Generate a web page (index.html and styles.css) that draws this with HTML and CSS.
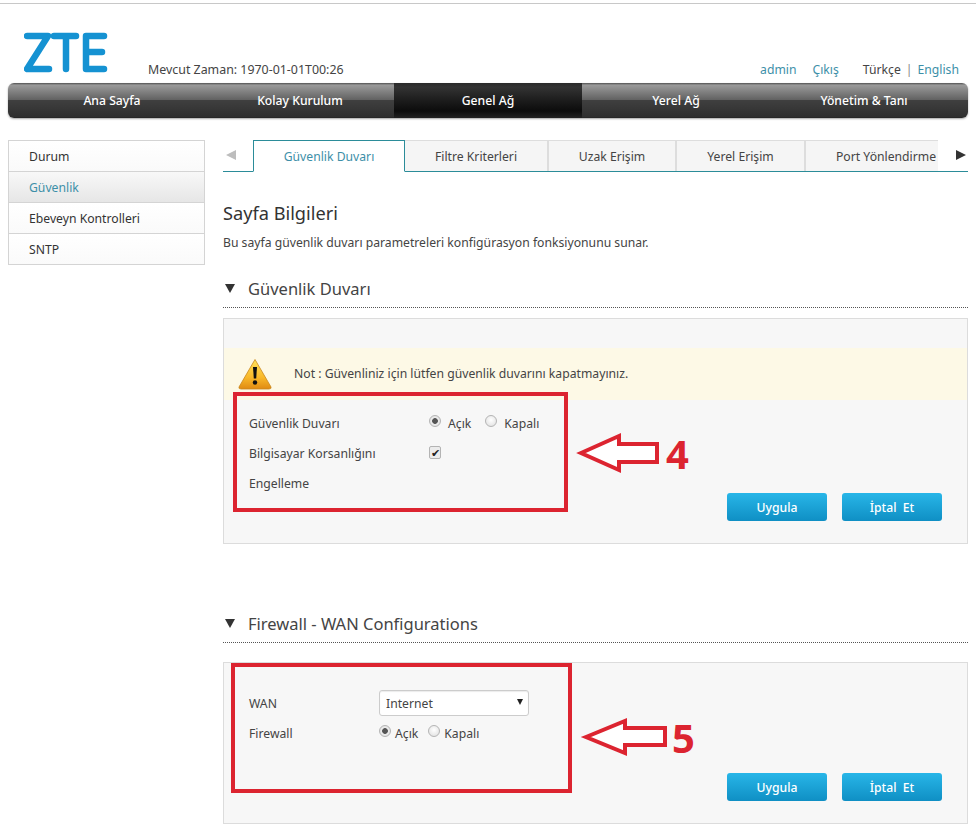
FILE: index.html
```html
<!DOCTYPE html>
<html lang="tr">
<head>
<meta charset="utf-8">
<title>ZTE</title>
<link rel="stylesheet" href="styles.css">
</head>
<body>
<div class="page">
  <header class="top">
    <svg class="logo" width="84" height="42" viewBox="0 0 84 42" aria-label="ZTE">
      <g fill="none" stroke="#1592d2" stroke-width="6.500" stroke-linecap="round" stroke-linejoin="round">
        <path d="M3 4H24L3 37H25"/>
        <path d="M30 4H52M42 4V37"/>
        <path d="M80 4H62V37H80M62 20H78"/>
      </g>
    </svg>
    <div class="clock">Mevcut Zaman: 1970-01-01T00:26</div>
    <div class="userbar">
      <a class="link">admin</a>
      <a class="link gap">Çıkış</a>
      <span class="lang">Türkçe</span>
      <span class="sep">|</span>
      <a class="link">English</a>
    </div>
  </header>

  <nav class="nav">
    <a class="nav-item">Ana Sayfa</a>
    <a class="nav-item">Kolay Kurulum</a>
    <a class="nav-item active">Genel Ağ</a>
    <a class="nav-item">Yerel Ağ</a>
    <a class="nav-item">Yönetim &amp; Tanı</a>
  </nav>

  <div class="layout">
    <aside class="side">
      <a class="side-item">Durum</a>
      <a class="side-item current">Güvenlik</a>
      <a class="side-item">Ebeveyn Kontrolleri</a>
      <a class="side-item">SNTP</a>
    </aside>

    <main class="main">
      <div class="tabs">
        <span class="tab-arrow left"></span>
        <a class="tab active t1">Güvenlik Duvarı</a>
        <a class="tab t2">Filtre Kriterleri</a>
        <a class="tab t3">Uzak Erişim</a>
        <a class="tab t4">Yerel Erişim</a>
        <a class="tab t5">Port Yönlendirme</a>
        <span class="tab-arrow right"></span>
      </div>

      <h1 class="title">Sayfa Bilgileri</h1>
      <p class="desc">Bu sayfa güvenlik duvarı parametreleri konfigürasyon fonksiyonunu sunar.</p>

      <h2 class="sec"><span class="caret"></span>Güvenlik Duvarı</h2>
      <section class="panel p1">
        <div class="note">
          <svg class="warn" width="34" height="32" viewBox="0 0 34 32">
            <defs>
              <linearGradient id="wg" x1="0" y1="0" x2="0" y2="1">
                <stop offset="0" stop-color="#ffe25a"/>
                <stop offset=".6" stop-color="#f9b92a"/>
                <stop offset="1" stop-color="#e08a12"/>
              </linearGradient>
            </defs>
            <path d="M17 1.500 33 29q.5 2-2 2H3q-2.500 0-2-2Z" fill="url(#wg)" stroke="#c9861c" stroke-width=".8"/>
            <path d="M15 9h4l-.8 11.500h-2.400Z" fill="#111"/>
            <circle cx="17" cy="24.500" r="2.200" fill="#111"/>
          </svg>
          <span>Not : Güvenliniz için lütfen güvenlik duvarını kapatmayınız.</span>
        </div>
        <div class="body">
          <div class="form f1">
            <div class="lbl">Güvenlik Duvarı</div>
            <div class="opts o1">
              <span class="radio on"></span><span>Açık</span>
              <span class="radio"></span><span>Kapalı</span>
            </div>
            <div class="lbl">Bilgisayar Korsanlığını</div>
            <div class="opts"><span class="check">✔</span></div>
            <div class="lbl">Engelleme</div>
            <div></div>
          </div>
          <div class="actions">
            <button class="btn">Uygula</button>
            <button class="btn">İptal&nbsp; Et</button>
          </div>
        </div>
      </section>

      <h2 class="sec s2"><span class="caret"></span>Firewall - WAN Configurations</h2>
      <section class="panel p2">
        <div class="body">
          <div class="form f2">
            <div class="lbl">WAN</div>
            <div class="selwrap"><select class="sel"><option>Internet</option></select></div>
            <div class="lbl">Firewall</div>
            <div class="opts o2">
              <span class="radio on"></span><span>Açık</span>
              <span class="radio"></span><span>Kapalı</span>
            </div>
          </div>
          <div class="actions">
            <button class="btn">Uygula</button>
            <button class="btn">İptal&nbsp; Et</button>
          </div>
        </div>
      </section>
    </main>
  </div>

  <div class="redbox b1"></div>
  <div class="redbox b2"></div>
  <svg class="overlay" width="976" height="837" viewBox="0 0 976 837">
    <g fill="#fff" stroke="#dc2430" stroke-width="4" stroke-linejoin="miter">
      <path d="M581 453 619 436V444H657V462H619V470Z"/>
      <path d="M586 737 625 721V728H665V745H625V753Z"/>
    </g>
  </svg>
  <span class="num n4">4</span>
  <span class="num n5">5</span>
</div>
</body>
</html>
```
FILE: styles.css
```css
* { box-sizing: border-box; }
html, body { margin: 0; padding: 0; background: #fff; }
body {
  font-family: "Noto Sans", "Open Sans", sans-serif;
  font-size: 12.2px;
  color: #444;
  overflow: hidden;
}
.page { position: relative; width: 976px; height: 837px; padding-top: 3px; }

.top {
  display: flex;
  align-items: flex-end;
  height: 80px;
  border-top: 1px solid #c8c8c8;
  padding: 0 17px 5px 24px;
}
.logo { display: block; margin-bottom: 4px; }
.clock { margin-left: 40px; font-size: 12.4px; line-height: 16px; color: #444; }
.userbar { margin-left: auto; display: flex; align-items: center; line-height: 16px; }
.link { color: #3d8fa8; }
.gap { margin-left: 16px; }
.lang { margin-left: 24px; color: #444; }
.sep { margin: 0 5px; color: #888; }

.nav {
  display: flex;
  height: 35px;
  margin: 0 8px;
  padding: 0 10px;
  border-radius: 6px;
  background: linear-gradient(#505050 0, #9a9a9a 6%, #5f5f5f 50%, #3f3f3f 50%, #2f2f2f 97%, #222 100%);
  box-shadow: 0 1px 2px rgba(0,0,0,.35);
}
.nav-item {
  flex: 0 0 188px;
  display: flex;
  align-items: center;
  justify-content: center;
  color: #fff;
  font-weight: 500;
  font-size: 12.2px;
}
.nav-item.active {
  background: linear-gradient(#2a2a2a 0, #333 12%, #1c1c1c 50%, #0c0c0c 80%, #222 100%);
}

.layout { display: flex; margin: 22px 8px 0; }

.side {
  flex: 0 0 197px;
  align-self: flex-start;
  border: 1px solid #d4d4d4;
  border-bottom: 0;
  background: #fff;
}
.side-item {
  display: flex;
  align-items: center;
  height: 31px;
  padding-left: 20px;
  color: #333;
  border-bottom: 1px solid #d4d4d4;
  background: linear-gradient(#fff, #fafafa);
}
.side-item.current {
  color: #3d8fa8;
  background: linear-gradient(#f8f8f8, #e6e6e6);
}

.main { flex: 0 0 745px; margin-left: 18px; }

.tabs {
  position: relative;
  display: flex;
  align-items: flex-start;
  height: 32px;
  padding-left: 30px;
  border-bottom: 1px solid #2b8c99;
}
.tab {
  display: flex;
  align-items: center;
  justify-content: center;
  height: 31px;
  background: #f5f5f5;
  border-top: 1px solid #ddd;
  border-right: 2px solid #ddd;
  color: #444;
}
.tab.active {
  position: relative;
  height: 32px;
  background: #fff;
  color: #3d8fa8;
  border: 1px solid #2b8c99;
  border-bottom: 1px solid #fff;
}
.t1 { width: 152px; }
.t2 { width: 144px; }
.t3 { width: 128px; }
.t4 { width: 129px; }
.t5 { width: 132px; border-right: 0; padding-left: 30px; justify-content: flex-start; white-space: nowrap; overflow: hidden; }
.tab-arrow { position: absolute; top: 10px; width: 0; height: 0; border-style: solid; border-width: 5.500px 0; border-color: transparent; }
.tab-arrow.left { left: 3px; border-right: 10px solid #bdbdbd; }
.tab-arrow.right { right: 2px; border-left: 10px solid #333; }

.title { margin: 30px 0 0; font-size: 18.200px; font-weight: 400; line-height: 22px; color: #333; }
.desc { margin: 11px 0 0; line-height: 16px; color: #444; }

.sec {
  display: flex;
  align-items: center;
  height: 37px;
  margin: 20px 0 0;
  padding-bottom: 2px;
  font-size: 16.500px;
  font-weight: 400;
  color: #444;
  border-bottom: 1px dotted #555;
}
.sec.s2 { margin-top: 62px; }
.caret {
  width: 0; height: 0;
  margin: 0 13px 0 2px;
  border-style: solid;
  border-width: 9px 5.500px 0;
  border-color: #333 transparent transparent;
}

.panel {
  display: flex;
  flex-direction: column;
  margin-top: 10px;
  background: #f7f7f7;
  border: 1px solid #dcdcdc;
}
.p1 { height: 226px; padding-top: 29px; }
.p2 { height: 162px; padding-top: 25px; margin-top: 19px; }

.note {
  display: flex;
  align-items: center;
  height: 52px;
  padding: 0 14px;
  background: #fdf9e6;
  color: #444;
}
.warn { margin-right: 22px; margin-top: -1px; }
.note span { margin-top: -2px; }

.body { flex: 1; display: flex; justify-content: space-between; padding: 0 25px 22px; }
.p1 .body { padding-top: 8px; }

.form { display: grid; grid-auto-rows: 30px; align-items: center; align-self: flex-start; }
.f1 { grid-template-columns: 180px auto; }
.f2 { grid-template-columns: 130px auto; }
.lbl { color: #444; }

.opts { display: flex; align-items: center; color: #444; }
.o1 .radio { margin-right: 7px; }
.o1 span + span + .radio { margin-left: 14px; }
.o2 .radio { margin-right: 4px; }
.o2 span + span + .radio { margin-left: 10px; }

.radio {
  display: block;
  width: 12px; height: 12px;
  margin-top: -4px;
  border-radius: 50%;
  border: 1px solid #b4b4b4;
  background: radial-gradient(circle at 50% 40%, #fff, #ddd);
}
.radio.on {
  background: radial-gradient(circle, #555 0, #555 2.500px, #ececec 3.200px, #ddd 100%);
}
.check {
  display: flex;
  align-items: center;
  justify-content: center;
  width: 12px; height: 13px;
  margin-top: -2px;
  border: 1px solid #b4b4b4;
  border-radius: 2px;
  background: #ececec;
  color: #222;
  font-size: 11px;
  line-height: 1;
}

.selwrap { position: relative; width: 150px; height: 26px; }
.selwrap::after {
  content: "";
  position: absolute;
  right: 6px; top: 9px;
  border-style: solid;
  border-width: 6px 3.500px 0;
  border-color: #222 transparent transparent;
}
.sel {
  appearance: none;
  display: block;
  width: 150px; height: 26px;
  padding: 0 6px;
  border: 1px solid #ccc;
  border-radius: 3px;
  background: #fff;
  font: inherit;
  color: #444;
  box-shadow: inset 0 1px 1px rgba(0,0,0,.08);
}

.actions { display: flex; gap: 15px; align-self: flex-end; }
.btn {
  width: 100px;
  height: 28px;
  padding: 0;
  border: 0;
  border-radius: 3px;
  background: linear-gradient(#28b6e8, #0f8fc4);
  color: #fff;
  font: inherit;
  font-weight: 500;
}

.redbox { position: absolute; border: 4px solid #dc2430; }
.b1 { left: 233px; top: 392px; width: 335px; height: 120px; }
.b2 { left: 231px; top: 663px; width: 341px; height: 130px; }
.overlay { position: absolute; left: 0; top: 0; pointer-events: none; }
.num {
  position: absolute;
  font-family: "Open Sans", "Noto Sans", sans-serif;
  font-weight: 700;
  font-size: 40px;
  line-height: 40px;
  color: #dc2430;
}
.n4 { left: 666px; top: 434px; }
.n5 { left: 672px; top: 718px; }
```
